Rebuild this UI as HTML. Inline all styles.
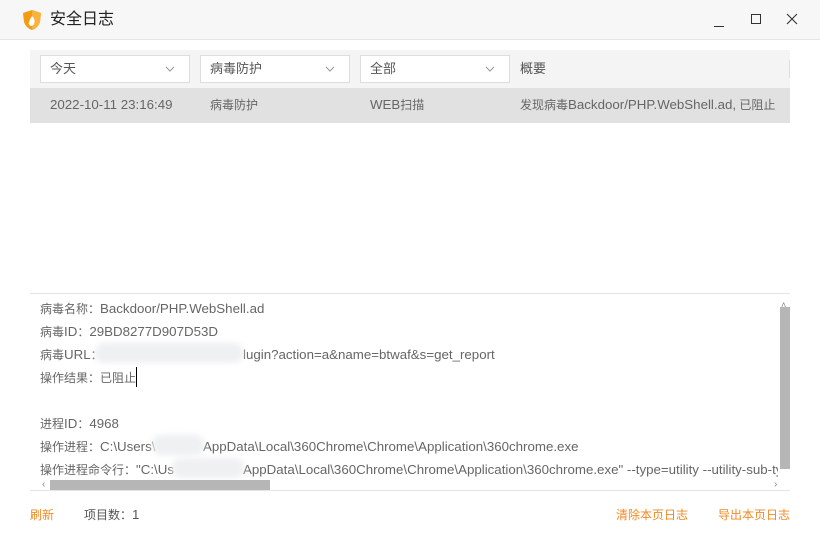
<!DOCTYPE html>
<html><head><meta charset="utf-8"><style>
*{margin:0;padding:0;box-sizing:border-box}
body{width:820px;height:540px;background:#fff;font-family:"Liberation Sans","Noto Sans CJK SC",sans-serif;font-size:12px;line-height:16px;color:#666;position:relative;overflow:hidden}
.abs{position:absolute;white-space:nowrap}
.l{font-size:13.3px}
.title{left:0;top:0;width:820px;height:40px;background:#f6f7f6;border-bottom:1px solid #e6e6e6}
.dd{top:55px;height:28px;width:150px;border:1px solid #ddd;background:#fff;padding-left:9px;line-height:26px;color:#555;font-size:13px}
.dd svg{position:absolute;right:14px;top:10px}
.blur{background:#eef0f2;border-radius:9px;filter:blur(3px)}
</style></head><body>
<div class="abs title"></div>
<svg class="abs" style="left:22px;top:9px" width="20" height="22" viewBox="0 0 20 22"><path d="M10 1 L19 4 L18 13 Q16 19 10 21 Q4 19 2 13 L1 4 Z" fill="#f39c12"/><path d="M10 1 L19 4 L18 13 Q16 19 10 21 Z" fill="#f7b33d"/><path d="M10 7 Q14 11 12 15 Q11 17 9 17 Q6 16 7 13 Q8 10 10 7Z" fill="#fff"/></svg>
<div class="abs" style="left:50px;top:10px;font-size:16px;line-height:20px;color:#222">安全日志</div>
<div class="abs" style="left:714px;top:26px;width:10px;height:1px;background:#333"></div>
<div class="abs" style="left:751px;top:14px;width:10px;height:10px;border:1px solid #333"></div>
<svg class="abs" style="left:786px;top:13px" width="12" height="12"><path d="M1 1L11 11M11 1L1 11" stroke="#333" stroke-width="1.1"/></svg>

<div class="abs" style="left:30px;top:50px;width:760px;height:38px;background:#f4f4f4"></div>
<div class="abs" style="left:789px;top:60px;width:1px;height:18px;background:#ddd"></div>
<div class="abs dd" style="left:40px">今天<svg width="10" height="6"><path d="M1 1L5 5L9 1" stroke="#999" fill="none"/></svg></div>
<div class="abs dd" style="left:200px">病毒防护<svg width="10" height="6"><path d="M1 1L5 5L9 1" stroke="#999" fill="none"/></svg></div>
<div class="abs dd" style="left:360px">全部<svg width="10" height="6"><path d="M1 1L5 5L9 1" stroke="#999" fill="none"/></svg></div>
<div class="abs" style="left:520px;top:61px;color:#555;font-size:13px">概要</div>

<div class="abs" style="left:30px;top:88px;width:760px;height:35px;background:#e1e1e1"></div>
<div class="abs l" style="left:50px;top:97px">2022-10-11 23:16:49</div>
<div class="abs" style="left:210px;top:97px">病毒防护</div>
<div class="abs" style="left:370px;top:97px"><span class="l">WEB</span>扫描</div>
<div class="abs" style="left:520px;top:97px">发现病毒<span class="l">Backdoor/PHP.WebShell.ad,</span> 已阻止</div>

<div class="abs" style="left:30px;top:293px;width:760px;height:1px;background:#e4e4e4"></div>
<div class="abs" style="left:40px;top:301px">病毒名称：<span class="l">Backdoor/PHP.WebShell.ad</span></div>
<div class="abs" style="left:40px;top:324px">病毒<span class="l">ID</span>：<span class="l">29BD8277D907D53D</span></div>
<div class="abs" style="left:40px;top:347px">病毒<span class="l">URL</span>：</div>
<div class="abs l" style="left:243px;top:347px">lugin?action=a&amp;name=btwaf&amp;s=get_report</div>
<div class="abs blur" style="left:95px;top:343px;width:148px;height:20px"></div>
<div class="abs" style="left:40px;top:370px">操作结果：已阻止</div>
<div class="abs" style="left:136px;top:367px;width:1px;height:20px;background:#000"></div>
<div class="abs" style="left:40px;top:416px">进程<span class="l">ID</span>：<span class="l">4968</span></div>
<div class="abs" style="left:40px;top:439px">操作进程：<span class="l">C:\Users\</span></div>
<div class="abs l" style="left:203px;top:439px">AppData\Local\360Chrome\Chrome\Application\360chrome.exe</div>
<div class="abs blur" style="left:152px;top:435px;width:52px;height:20px"></div>
<div class="abs" style="left:40px;top:462px">操作进程命令行：<span class="l">"C:\Us</span></div>
<div class="abs l" style="left:243px;top:462px;width:535px;overflow:hidden">AppData\Local\360Chrome\Chrome\Application\360chrome.exe" --type=utility --utility-sub-type</div>
<div class="abs blur" style="left:172px;top:458px;width:72px;height:20px"></div>

<div class="abs" style="left:780px;top:307px;width:10px;height:162px;background:#b6b6b6"></div>
<div class="abs" style="left:781px;top:297px;font-size:9px;color:#888">˄</div>
<div class="abs" style="left:50px;top:480px;width:220px;height:10px;background:#b6b6b6"></div>
<div class="abs" style="left:42px;top:477px;font-size:10px;color:#888">‹</div>
<div class="abs" style="left:774px;top:477px;font-size:10px;color:#888">›</div>
<div class="abs" style="left:30px;top:490px;width:760px;height:1px;background:#e4e4e4"></div>

<div class="abs" style="left:30px;top:507px;color:#f08a24">刷新</div>
<div class="abs" style="left:84px;top:507px;color:#555">项目数：<span class="l">1</span></div>
<div class="abs" style="left:616px;top:507px;color:#f08a24">清除本页日志</div>
<div class="abs" style="left:718px;top:507px;color:#f08a24">导出本页日志</div>
</body></html>
